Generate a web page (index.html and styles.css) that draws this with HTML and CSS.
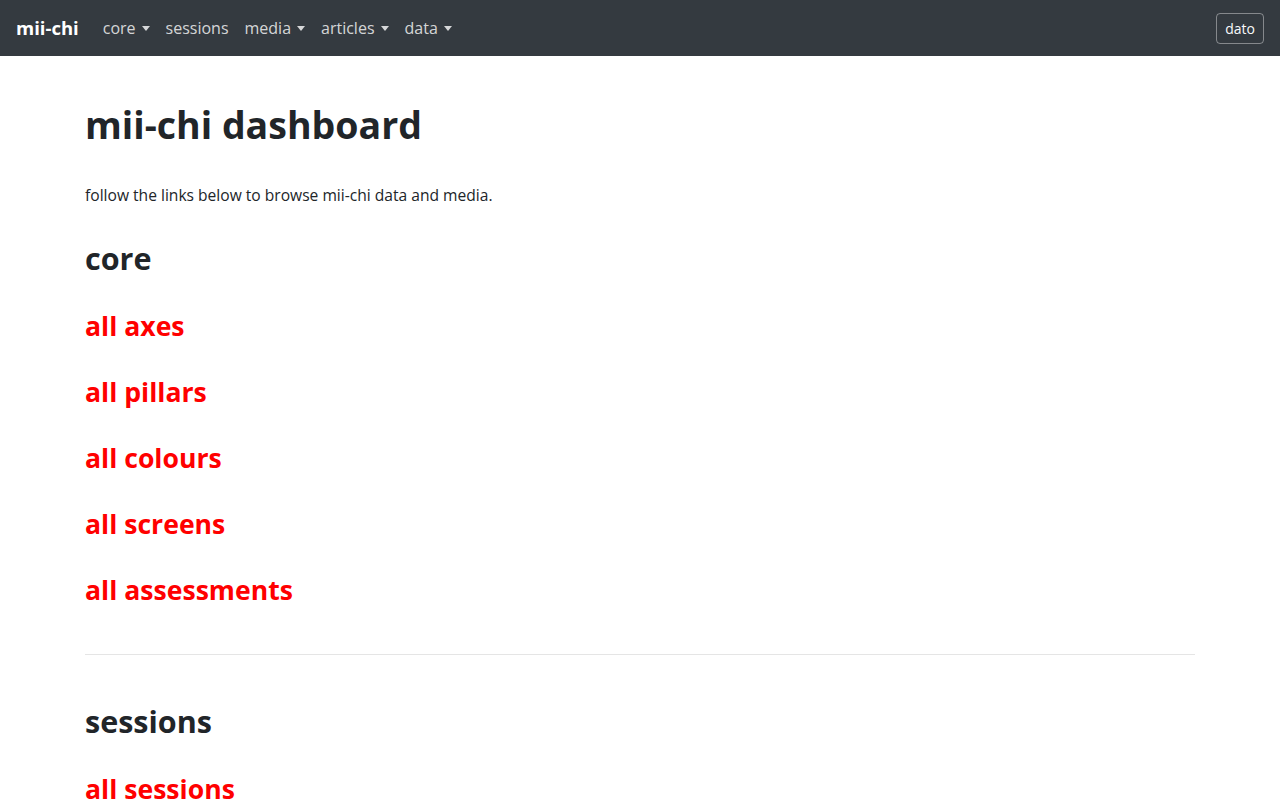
FILE: index.html
```html
<!DOCTYPE html>
<html lang="en">
<head>
<meta charset="UTF-8">
<meta name="viewport" content="width=device-width, initial-scale=1.0">
<title>mii-chi dashboard</title>
<link rel="stylesheet" href="styles.css">
</head>
<body>

<!-- top navigation -->
<nav class="navbar">
    <a class="brand" href="#">mii-chi</a>
    <ul class="nav">
        <li><a class="nav-link dropdown" href="#">core</a></li>
        <li><a class="nav-link" href="#">sessions</a></li>
        <li><a class="nav-link dropdown" href="#">media</a></li>
        <li><a class="nav-link dropdown" href="#">articles</a></li>
        <li><a class="nav-link dropdown" href="#">data</a></li>
    </ul>
    <button class="btn-user">dato</button>
</nav>

<div class="container">
    <h1>mii-chi dashboard</h1>
    <p class="lead">follow the links below to browse mii-chi data and media.</p>

    <div class="section">
        <h2>core</h2>
        <h3><a href="#">all axes</a></h3>
        <h3><a href="#">all pillars</a></h3>
        <h3><a href="#">all colours</a></h3>
        <h3><a href="#">all screens</a></h3>
        <h3><a href="#">all assessments</a></h3>
    </div>

    <hr>

    <div class="section">
        <h2>sessions</h2>
        <h3><a href="#">all sessions</a></h3>
    </div>
</div>

</body>
</html>
```

FILE: styles.css
```css
* {
    box-sizing: border-box;
}

body {
    margin: 0;
    font-family: 'Open Sans', 'Noto Sans', sans-serif;
    font-size: 16px;
    line-height: 1.5;
    color: #212529;
    background: #fff;
}

a {
    text-decoration: none;
}

.navbar {
    display: flex;
    align-items: center;
    height: 56px;
    padding: 8px 16px;
    background-color: #343a40;
}

.brand {
    font-size: 18.5px;
    font-weight: 700;
    color: #fff;
    margin-right: 16px;
    line-height: 30px;
}

.nav {
    display: flex;
    list-style: none;
    margin: 0;
    padding: 0;
    flex: 1;
}

.nav-link {
    display: block;
    padding: 8px;
    color: rgba(255,255,255,0.8);
}

.nav-link.dropdown::after {
    content: "";
    display: inline-block;
    margin-left: 6px;
    vertical-align: 3px;
    border-top: 5px solid;
    border-left: 4px solid transparent;
    border-right: 4px solid transparent;
}

.btn-user {
    font-family: inherit;
    font-size: 14px;
    line-height: 21px;
    padding: 4px 8px;
    color: #f8f9fa;
    background: transparent;
    border: 1px solid rgba(255,255,255,0.4);
    border-radius: 4px;
    cursor: pointer;
}

.container {
    max-width: 1140px;
    margin: 0 auto;
    padding: 45px 15px;
}

h1 {
    font-size: 37.5px;
    font-weight: 700;
    line-height: 48px;
    margin: 0 0 35px;
}

.lead {
    font-size: 15.6px;
    margin: 0 0 32px;
}

h2 {
    font-size: 30.5px;
    font-weight: 700;
    line-height: 38px;
    margin: 0;
}

h3 {
    font-size: 26.6px;
    font-weight: 700;
    line-height: 34px;
    margin: 32px 0 0;
}

h3 a {
    color: #ff0000;
}

hr {
    border: 0;
    border-top: 1px solid #e5e5e5;
    margin: 47px 0 47px;
}
```
